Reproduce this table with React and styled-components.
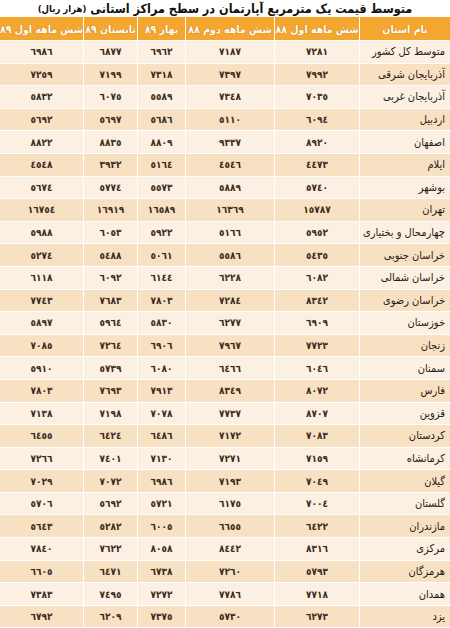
import React from 'react';
import styled, { createGlobalStyle } from 'styled-components';

const GlobalStyle = createGlobalStyle`
    html, body {
        margin: 0;
        padding: 0;
        background: #ffffff;
    }
    body {
        font-family: "DejaVu Sans Condensed", "DejaVu Sans", sans-serif;
        font-stretch: condensed;
    }
`;

const COLS = '90px 84px 88px 47px 53px 83px';

const Page = styled.div`
    width: 450px;
    height: 628px;
    overflow: hidden;
    direction: rtl;
    display: flex;
    flex-direction: column;
`;

const Title = styled.h1`
    margin: 0;
    height: 16px;
    display: flex;
    align-items: center;
    justify-content: center;
    gap: 4px;
    font-size: 12.5px;
    font-weight: bold;
    color: #111;
    white-space: nowrap;
`;

const Unit = styled.span`
    font-size: 9.5px;
`;

const Table = styled.div`
    margin-top: 1px;
    display: grid;
    grid-template-columns: ${COLS};
    column-gap: 1px;
    row-gap: 1px;
`;

const HeadCell = styled.div`
    height: 23px;
    background: #f4a62f;
    color: #fff;
    font-size: 10.5px;
    font-weight: bold;
    white-space: nowrap;
    display: flex;
    align-items: center;
    justify-content: center;
    text-shadow: 0 0 1px rgba(120, 60, 0, 0.6);
    overflow: hidden;
`;

const Cell = styled.div`
    height: 21.6px;
    background: ${(p) => (p.$dark ? '#f8e1c3' : '#fbf0e1')};
    display: flex;
    align-items: center;
    justify-content: ${(p) => (p.$name ? 'flex-start' : 'center')};
    padding: ${(p) => (p.$name ? '0 5px 0 0' : '0')};
    font-size: ${(p) => (p.$name ? '11px' : '10px')};
    font-weight: ${(p) => (p.$name ? 'normal' : 'bold')};
    color: ${(p) => (p.$name ? '#1e1a16' : '#3b2c1e')};
    white-space: nowrap;
    overflow: hidden;
`;

const headers = [
    'نام استان',
    'شش ماهه اول ٨٨',
    'شش ماهه دوم ٨٨',
    'بهار ٨٩',
    'تابستان ٨٩',
    'شش ماهه اول ٨٩',
];

const rows = [
    ['متوسط کل کشور', 7281, 7187, 6962, 6877, 6986],
    ['آذربایجان شرقی', 7992, 7397, 7318, 7199, 7259],
    ['آذربایجان غربی', 7035, 7348, 5589, 6075, 5832],
    ['اردبیل', 6094, 5110, 5686, 5697, 5692],
    ['اصفهان', 8920, 9337, 8809, 8835, 8822],
    ['ایلام', 4473, 4546, 5164, 3932, 4548],
    ['بوشهر', 5740, 5889, 5573, 5774, 5674],
    ['تهران', 15787, 16369, 16589, 16919, 16754],
    ['چهارمحال و بختیاری', 5952, 5166, 5922, 6053, 5988],
    ['خراسان جنوبی', 5435, 5586, 5061, 5488, 5274],
    ['خراسان شمالی', 6082, 6228, 6144, 6092, 6118],
    ['خراسان رضوی', 8342, 7284, 7803, 7683, 7743],
    ['خوزستان', 6909, 6277, 5830, 5964, 5897],
    ['زنجان', 7723, 7967, 6906, 7264, 7085],
    ['سمنان', 6046, 6466, 6080, 5739, 5910],
    ['فارس', 8072, 8349, 7913, 7693, 7803],
    ['قزوین', 8707, 7737, 7078, 7198, 7138],
    ['کردستان', 7083, 7172, 6486, 6424, 6455],
    ['کرمانشاه', 7159, 7271, 7130, 7401, 7266],
    ['گیلان', 7049, 7193, 6986, 7072, 7029],
    ['گلستان', 7004, 6175, 5721, 5692, 5706],
    ['مازندران', 6422, 6655, 6005, 5282, 5643],
    ['مرکزی', 8316, 8442, 8058, 7622, 7840],
    ['هرمزگان', 5793, 7260, 6738, 6471, 6605],
    ['همدان', 7718, 7786, 7272, 7495, 7383],
    ['یزد', 6273, 5730, 7375, 6209, 6792],
];

// western digits -> arabic-indic, as printed in the table
const toArabic = (n) =>
    String(n).replace(/[0-9]/g, (d) => String.fromCharCode(0x0660 + Number(d)));

export default function App() {
    return (
        <Page>
            <GlobalStyle />
            <Title>
                متوسط قیمت یک مترمربع آپارتمان در سطح مراکز استانی
                <Unit>(هزار ریال)</Unit>
            </Title>
            <Table>
                {headers.map((h) => (
                    <HeadCell key={h}>{h}</HeadCell>
                ))}
                {rows.map((row, r) =>
                    row.map((value, c) => (
                        <Cell
                            key={`${r}-${c}`}
                            $dark={r % 2 === 1}
                            $name={c === 0}
                        >
                            {c === 0 ? value : toArabic(value)}
                        </Cell>
                    ))
                )}
            </Table>
        </Page>
    );
}
